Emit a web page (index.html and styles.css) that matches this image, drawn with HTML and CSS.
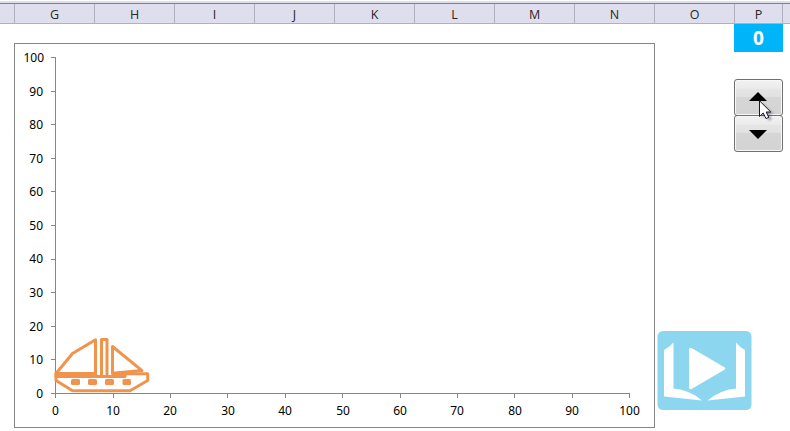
FILE: index.html
```html
<!DOCTYPE html>
<html lang="en">
<head>
<meta charset="utf-8">
<title>Sheet</title>
<link rel="stylesheet" href="styles.css">
</head>
<body>
<div class="columns">
  <span></span><span>G</span><span>H</span><span>I</span><span>J</span><span>K</span><span>L</span><span>M</span><span>N</span><span>O</span><span>P</span><span></span>
</div>
<main class="sheet">
  <svg class="chart" width="641" height="385" viewBox="14 43 641 385">
    <rect class="frame" x="14.5" y="43.5" width="640" height="384"/>
    <path class="axis" d="M55.5 57V394M51 393.5H630M51 57.5h4M51 91.5h4M51 124.5h4M51 158.5h4M51 191.5h4M51 225.5h4M51 259.5h4M51 292.5h4M51 326.5h4M51 359.5h4M55.5 393v5M113.5 393v5M170.5 393v5M227.5 393v5M285.5 393v5M342.5 393v5M400.5 393v5M457.5 393v5M514.5 393v5M572.5 393v5M629.5 393v5"/>
    <g class="ylabels">
      <text x="44" y="62">100</text><text x="43" y="96">90</text><text x="43" y="129">80</text><text x="43" y="163">70</text><text x="43" y="196">60</text><text x="43" y="230">50</text><text x="43" y="263">40</text><text x="43" y="297">30</text><text x="43" y="331">20</text><text x="43" y="364">10</text><text x="43" y="398">0</text>
    </g>
    <g class="xlabels">
      <text x="55.5" y="415">0</text><text x="113" y="415">10</text><text x="170" y="415">20</text><text x="228" y="415">30</text><text x="285" y="415">40</text><text x="343" y="415">50</text><text x="400" y="415">60</text><text x="457" y="415">70</text><text x="515" y="415">80</text><text x="572" y="415">90</text><text x="629.5" y="415">100</text>
    </g>
    <g class="ship">
      <path d="M56 373.5V380.5L72.5 390.7H130L147.7 380.5V373.7H113"/>
      <path d="M95.500 373.5V339.7L72.5 353.5L56 373.5H95.500V376M56 375H96M56 376.5H125V373.5"/>
      <path d="M101.5 376V339.5H107V376"/>
      <path d="M112.5 373.5V346.5L142 370.6L112.5 373.2"/>
      <g class="windows">
        <rect x="71" y="379" width="9" height="6" rx="1.500"/>
        <rect x="88" y="379" width="9" height="6" rx="1.500"/>
        <rect x="105" y="379" width="9" height="6" rx="1.500"/>
        <rect x="122.500" y="379" width="8.500" height="6" rx="1.500"/>
      </g>
    </g>
  </svg>
  <svg class="logo" width="95" height="79" viewBox="0 0 95 79">
    <rect x=".500" width="94" height="79" rx="5.500" fill="#8dd6f0"/>
    <g fill="#fff">
      <path d="M7 19Q12 16.500 16.500 11.500V57.500Q33 59 45 69.500L7 65.500Z"/>
      <path d="M88 19Q83 16.500 79 11.500V57.500Q63 59 50.500 69.500L88 65.500Z"/>
      <path d="M32 18.500Q32 16 34.500 17L67 36Q69.500 37.500 67 39L34.500 58Q32 59 32 56.500Z"/>
    </g>
  </svg>
  <div class="control">
    <div class="value">0</div>
    <div class="spinner">
      <button aria-label="Increase"><svg width="18" height="9"><path d="M0 9L9 0L18 9Z"/></svg></button>
      <button aria-label="Decrease"><svg width="18" height="9"><path d="M0 0H18L9 9Z"/></svg></button>
    </div>
  </div>
</main>
<svg class="cursor" width="20" height="25" viewBox="0 0 20 25">
  <path class="shade" d="M3 3V18L7 15L10 21L13 19L10 14H15Z"/>
  <path class="pointer" d="M.5 .8V16.500L4.200 13L7 18.600L9.800 17.300L7.200 12H11.800Z"/>
</svg>
</body>
</html>
```

FILE: styles.css
```css
body {
  margin: 0;
  width: 790px;
  height: 431px;
  overflow: hidden;
  background: #fff;
  font-family: "Noto Sans", sans-serif;
}
.columns {
  box-sizing: border-box;
  height: 24px;
  display: grid;
  grid-template-columns: 15px repeat(9, 80px) 48px 1fr;
  border-top: 1px solid #fff;
  border-bottom: 1px solid #b1b1bc;
  background: linear-gradient(#dfdeed 2px, #808087 2px, #808087 3px, #dfdeed 3px);
}
.columns span {
  box-sizing: border-box;
  margin-top: 3px;
  height: 19px;
  border-right: 1px solid #b1b1bc;
  font-family: "Open Sans", sans-serif;
  font-size: 12.5px;
  line-height: 21px;
  text-align: center;
  color: #262626;
}
.columns span:last-child { border-right: 0; }
.sheet {
  display: flex;
  height: 407px;
  padding-left: 14px;
}
.chart { margin-top: 19px; flex: none; }
.frame { fill: #fff; stroke: #868686; }
.axis { fill: none; stroke: #868686; }
.chart text { font-size: 12px; fill: #000; }
.ylabels { text-anchor: end; }
.xlabels { text-anchor: middle; }
.ship path {
  fill: none;
  stroke: #f0944d;
  stroke-width: 3;
  stroke-linejoin: round;
  stroke-linecap: round;
}
.windows { fill: #f0944d; }
.logo { margin: 307px -18px 0 2px; flex: none; }
.control { width: 49px; flex: none; }
.value {
  height: 28px;
  background: #00b4fa;
  color: #fff;
  font-size: 19px;
  font-weight: 700;
  line-height: 29px;
  text-align: center;
}
.spinner { margin-top: 27px; display: grid; }
.spinner button {
  box-sizing: border-box;
  width: 49px;
  height: 37px;
  padding: 0 1px 2px 0;
  border: 1px solid #707070;
  border-radius: 3px;
  box-shadow: inset 0 0 0 1px #f8f8f8;
  background: linear-gradient(#f2f2f2, #ebebeb 24%, #e5e5e5 25%, #e2e2e2 47%, #d6d6d6 48%, #d3d3d3);
  display: grid;
  place-items: center;
}
.spinner button + button { margin-top: -1px; padding: 1px 1px 0 0; }
.cursor { position: absolute; left: 759px; top: 100px; }
.pointer { fill: #fff; stroke: #16162e; stroke-width: 1; }
.shade { fill: #000; opacity: .3; filter: blur(1px); }
```
